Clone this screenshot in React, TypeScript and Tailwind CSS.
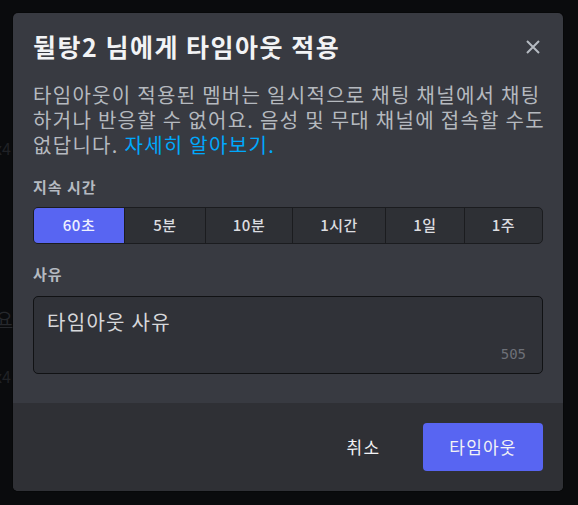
import React from "react";

const durations = [
  { label: "60초", w: "w-[90px]", selected: true },
  { label: "5분", w: "w-[81px]" },
  { label: "10분", w: "w-[87px]" },
  { label: "1시간", w: "w-[93px]" },
  { label: "1일", w: "w-[79px]" },
  { label: "1주", w: "w-[78px]" },
];

export default function App() {
  return (
    <div className="relative h-[505px] w-[578px] overflow-hidden bg-[#0a0b0d] font-['Noto_Sans_CJK_KR','Noto_Sans',sans-serif]">
      {/* dimmed page content behind the backdrop */}
      <span className="absolute left-[-6px] top-[136px] text-[16px] text-[#202226]">x4</span>
      <span className="absolute left-[-4px] top-[305px] text-[18px] text-[#26282c] underline">요</span>
      <span className="absolute left-[-6px] top-[364px] text-[16px] text-[#202226]">x4</span>

      <div className="relative pl-[13px] pt-[13px]">
        <div className="flex w-[550px] flex-col overflow-hidden rounded-[5px] bg-[#383a41] shadow-[0_0_0_1px_rgba(0,0,0,0.25)]">
          <div className="flex flex-col px-[20px] pb-[29px] pt-[17px]">
            <div className="flex items-start justify-between">
              <h2 className="text-[25px] font-bold leading-[32px] tracking-[1.5px] text-[#f2f3f5]">뒬탕2 님에게 타임아웃 적용</h2>
              <button className="mr-[3px] mt-[10px] text-[#b5bac1]" aria-label="닫기">
                <svg width="14" height="14" viewBox="0 0 14 14" fill="none">
                  <path d="M1 1L13 13M13 1L1 13" stroke="currentColor" strokeWidth="2" />
                </svg>
              </button>
            </div>
            <p className="mt-[20px] whitespace-nowrap text-[20px] leading-[25px] tracking-[1.3px] text-[#b5b9bf]">
              타임아웃이 적용된 멤버는 일시적으로 채팅 채널에서 채팅
              <br />
              하거나 반응할 수 없어요. 음성 및 무대 채널에 접속할 수도
              <br />
              없답니다. <span className="text-[#00a8fc]">자세히 알아보기.</span>
            </p>

            <div className="mt-[20px] text-[15px] font-bold leading-[20px] tracking-[1px] text-[#b5bac1]">지속 시간</div>
            <div className="mt-[10px] flex h-[37px] w-[510px] overflow-hidden rounded-[5px] border border-[#1b1c1f] bg-[#2e3035]">
              {durations.map((d, i) => (
                <div
                  key={d.label}
                  className={`${d.w} flex items-center justify-center text-[15px] font-medium tracking-[0.5px] ${
                    i > 0 ? "border-l border-[#1b1c1f]" : ""
                  } ${d.selected ? "bg-[#5865f2] text-[#eef0ff]" : "text-[#dcdde0]"}`}
                >
                  {d.label}
                </div>
              ))}
            </div>

            <div className="mt-[20px] text-[15px] font-bold leading-[20px] tracking-[1px] text-[#b5bac1]">사유</div>
            <div className="relative mt-[12px] h-[78px] w-[510px] rounded-[5px] border border-[#111214] bg-[#303238] px-[13px] pt-[12px]">
              <div className="text-[20px] leading-[25px] tracking-[1.3px] text-[#d7d8db]">타임아웃 사유</div>
              <div className="absolute bottom-[11px] right-[16px] font-['DejaVu_Sans_Mono',monospace] text-[14px] leading-[16px] text-[#6d7077]">
                505
              </div>
            </div>
          </div>

          <div className="flex h-[88px] items-center justify-end gap-[22px] bg-[#2f3035] px-[20px]">
            <button className="flex h-[48px] w-[75px] items-center justify-center text-[17px] tracking-[1.3px] text-[#f2f3f5]">취소</button>
            <button className="flex h-[48px] w-[120px] items-center justify-center rounded-[4px] bg-[#5865f2] text-[17px] tracking-[1.2px] text-[#f2f3f5]">
              타임아웃
            </button>
          </div>
        </div>
      </div>
    </div>
  );
}
